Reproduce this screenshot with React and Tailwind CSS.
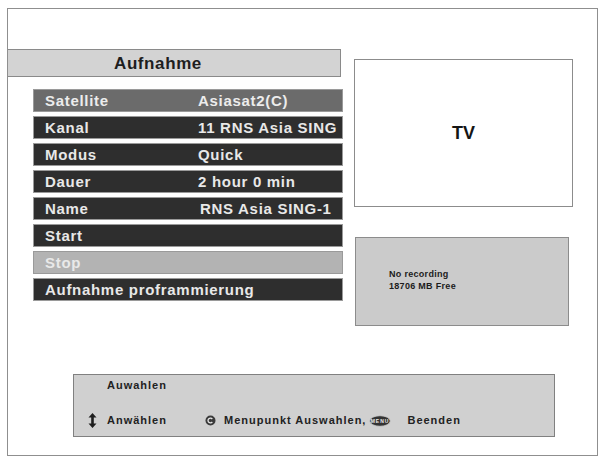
import React from "react";

const rows = [
  { label: "Satellite", value: "Asiasat2(C)", kind: "sel" },
  { label: "Kanal", value: "11 RNS Asia SING" },
  { label: "Modus", value: "Quick" },
  { label: "Dauer", value: "2 hour 0 min" },
  { label: "Name", value: "RNS Asia SING-1", vpad: true },
  { label: "Start" },
  { label: "Stop", kind: "dis" },
  { label: "Aufnahme proframmierung" },
];

function Row({ label, value, kind, vpad }) {
  const bg =
    kind === "sel"
      ? "bg-[#6b6b6b] text-[#ececec]"
      : kind === "dis"
      ? "bg-[#b3b3b3] text-[#e9e9e9]"
      : "bg-[#2e2e2e] text-[#e8e8e8]";
  return (
    <div
      className={`flex items-center h-[21px] pl-[11px] whitespace-nowrap text-[15px] font-bold tracking-[0.7px] leading-none shadow-[0_0_0_1px_#9a9a9a] ${bg}`}
    >
      <span className="w-[153px] shrink-0">{label}</span>
      {value && <span className={vpad ? "pl-[2px]" : ""}>{value}</span>}
    </div>
  );
}

function UpDown() {
  return (
    <svg width="9" height="15" viewBox="0 0 9 15">
      <path d="M4.5 0 L8.5 4.5 L5.8 4.5 L5.8 10.5 L8.5 10.5 L4.5 15 L0.5 10.5 L3.2 10.5 L3.2 4.5 L0.5 4.5 Z" fill="#1e1e1e" />
    </svg>
  );
}

function OkIcon() {
  return (
    <svg width="11" height="11" viewBox="0 0 11 11">
      <circle cx="5.5" cy="5.5" r="5" fill="#3a3a3a" />
      <path d="M7.3 4 A2.4 2.4 0 1 0 7.3 7" stroke="#e8e8e8" strokeWidth="1.3" fill="none" />
    </svg>
  );
}

function MenuIcon() {
  return (
    <svg width="22" height="12" viewBox="0 0 22 12">
      <ellipse cx="11" cy="6" rx="10.3" ry="5.3" fill="#333" stroke="#c8c8c8" strokeWidth="0.9" />
      <text x="11" y="7.8" textAnchor="middle" fontSize="5" fontWeight="bold" fill="#eee" fontFamily="Liberation Sans, Arial, sans-serif">
        MENU
      </text>
    </svg>
  );
}

export default function App() {
  return (
    <div
      className="w-[606px] h-[457px] bg-white pt-[8px] pl-[7px]"
      style={{ fontFamily: '"Liberation Sans", Arial, Helvetica, sans-serif' }}
    >
      <div className="w-[591px] h-[448px] border border-[#8f8f8f] flex flex-col">
        <div className="flex pt-[40px]">
          {/* left column */}
          <div className="w-[334px] shrink-0 flex flex-col">
            <div className="h-[28px] w-[333px] bg-[#d3d3d3] border-y border-r border-[#8a8a8a] flex items-center pl-[106px] text-[17px] font-bold tracking-[0.6px] text-[#1e1e1e] leading-none">
              Aufnahme
            </div>
            <div className="ml-[26px] mt-[13px] w-[308px] flex flex-col gap-[6px]">
              {rows.map((r) => (
                <Row key={r.label} {...r} />
              ))}
            </div>
          </div>
          {/* right column */}
          <div className="ml-[12px] mt-[10px] flex flex-col">
            <div className="w-[219px] h-[148px] border border-[#8c8c8c] bg-white flex items-center justify-center text-[18px] font-bold text-[#151515] leading-none">
              TV
            </div>
            <div className="mt-[30px] ml-[1px] w-[214px] h-[89px] bg-[#cbcbcb] border border-[#8c8c8c] pl-[33px] pt-[30px] text-[9px] font-bold leading-[12px] tracking-[0.3px] text-[#1c1c1c]">
              <div>No recording</div>
              <div>18706 MB Free</div>
            </div>
          </div>
        </div>
        {/* bottom help panel */}
        <div className="mt-auto mb-[18px] ml-[65px] w-[482px] h-[63px] bg-[#d0d0d0] border border-[#808080] flex flex-col text-[11px] font-bold tracking-[1px] text-[#222] leading-none">
          <div className="pl-[33px] pt-[5px]">Auwahlen</div>
          <div className="mt-[22px] flex items-center">
            <span className="ml-[14px] w-[19px] flex"><UpDown /></span>
            <span className="w-[98px]">Anwählen</span>
            <span className="w-[19px] flex"><OkIcon /></span>
            <span>Menupunkt Auswahlen,</span>
            <span className="ml-[3px] w-[38px] flex"><MenuIcon /></span>
            <span>Beenden</span>
          </div>
        </div>
      </div>
    </div>
  );
}
